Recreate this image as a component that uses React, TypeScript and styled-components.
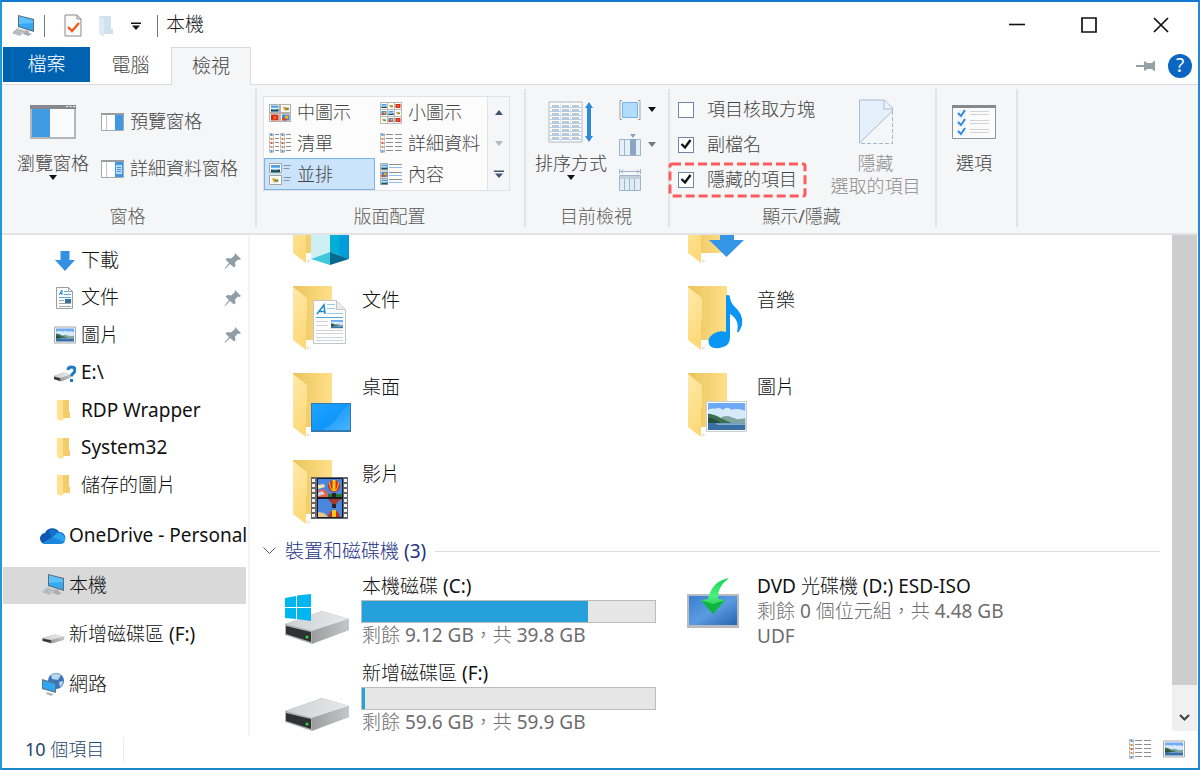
import React, { useLayoutEffect, useRef } from "react";
import styled, { createGlobalStyle, css } from "styled-components";

const GlobalStyle = createGlobalStyle`
  *, *::before, *::after { box-sizing: border-box; }
  body {
    margin: 0;
    background: #fff;
    color: #1b1b1b;
    font: 400 18px/25px "Noto Sans", "Noto Sans CJK TC Light", "Noto Sans CJK TC", sans-serif;
  }
  button, input { font: inherit; color: inherit; }
  svg { display: block; flex: none; }
`;

/* ---------- window frame ---------- */

const Window = styled.div`
  display: flex;
  flex-direction: column;
  height: 100vh;
  min-height: 600px;
  border: 2px solid;
  border-color: #1279cf #2b86d3 #1b86cc #1b9ae0;
  background: #fff;
  overflow: hidden;
`;

const plainButton = css`
  display: flex;
  align-items: center;
  justify-content: center;
  padding: 0;
  border: 0;
  background: none;
  white-space: nowrap;
`;

const TitleBar = styled.header`
  display: flex;
  align-items: center;
  height: 45px;
  padding: 0 1px 0 9px;
`;

const QuickAccess = styled.div`
  display: flex;
  align-items: center;
  height: 24px;
  margin-top: 3px;
`;

const QuickButton = styled.button<{ $gap: number }>`
  ${plainButton}
  margin-left: ${(p) => p.$gap}px;
`;

const Divider = styled.span<{ $gap: number }>`
  width: 1px;
  height: 22px;
  margin-left: ${(p) => p.$gap}px;
  background: #777;
`;

const Title = styled.h1`
  flex: 1;
  margin: 0 0 0 8px;
  font-size: 19px;
  font-weight: 400;
`;

const WindowButton = styled.button`
  ${plainButton}
  width: 72px;
  height: 44px;
`;

/* ---------- tabs ---------- */

const TabBar = styled.nav`
  display: flex;
  height: 38px;
  padding: 0 6px 0 1px;
  border-bottom: 1px solid #dadbdc;
`;

const Tab = styled.button<{ $kind?: "file" | "active" }>`
  ${plainButton}
  width: 81px;
  height: 37px;
  font-size: 19px;
  color: #444;
  ${(p) =>
    p.$kind === "file" &&
    css`
      width: 87px;
      height: 35px;
      background: #0063b1;
      color: #fff;
    `}
  ${(p) =>
    p.$kind === "active" &&
    css`
      width: 80px;
      height: 38px;
      border: 1px solid #dadbdc;
      border-bottom: 0;
      background: #f5f6f7;
    `}
`;

const TabTools = styled.div`
  display: flex;
  align-items: center;
  gap: 12px;
  margin-left: auto;
`;

const HelpButton = styled.button`
  ${plainButton}
  width: 24px;
  height: 24px;
  border-radius: 50%;
  background: #0b66c3;
  color: #fff;
  font-size: 19px;
`;

/* ---------- ribbon ---------- */

const Ribbon = styled.section`
  display: flex;
  height: 150px;
  padding: 4px 0 6px;
  border-bottom: 2px solid #e2e3e4;
  background: #f5f6f7;
`;

const Group = styled.div<{ $width: number }>`
  display: flex;
  flex-direction: column;
  width: ${(p) => p.$width}px;
  border-right: 2px solid #e2e3e4;
`;

const GroupBody = styled.div<{ $left: number }>`
  display: flex;
  flex: 1;
  padding-left: ${(p) => p.$left}px;
`;

const GroupCaption = styled.div`
  height: 22px;
  padding-right: 2px;
  line-height: 22px;
  text-align: center;
  color: #5a5a5a;
`;

const BigButton = styled.button<{ $width: number }>`
  ${plainButton}
  flex-direction: column;
  justify-content: flex-start;
  width: ${(p) => p.$width}px;
  padding-top: 3px;
  color: #444;
  line-height: 23px;

  &:disabled { color: #8c8c8c; }
`;

const BigIcon = styled.span`
  display: flex;
  align-items: center;
  height: 60px;
`;

const SideButtons = styled.div<{ $top: number; $gap: number }>`
  display: flex;
  flex-direction: column;
  align-items: flex-start;
  gap: ${(p) => p.$gap}px;
  padding: ${(p) => p.$top}px 0 0 7px;
`;

const SideButton = styled.button`
  ${plainButton}
  gap: 6px;
  min-height: 25px;
  color: #444;
`;

const Gallery = styled.div`
  display: grid;
  grid-template-columns: 111px 112px 22px;
  align-self: flex-start;
  margin-top: 7px;
  border: 1px solid #dfe2e8;
  background: #fcfcfc;
`;

const GalleryColumn = styled.div`
  display: grid;
  grid-template-rows: 31px 30px 32px;
`;

const GalleryItem = styled.button<{ $active?: boolean }>`
  ${plainButton}
  justify-content: flex-start;
  gap: 6px;
  padding-left: 4px;
  border: 1px solid ${(p) => (p.$active ? "#78b4e8" : "transparent")};
  background: ${(p) => (p.$active ? "#cce4fb" : "transparent")};
  color: #444;
`;

const GalleryScroll = styled(GalleryColumn)`
  border-left: 1px solid #dfe2e8;
  background: #f5f6f7;
`;

const GalleryArrow = styled.button`
  ${plainButton}
`;

const CheckList = styled.div`
  display: flex;
  flex-direction: column;
  gap: 10px;
  width: 150px;
  padding-top: 8px;
`;

const CheckLabel = styled.label`
  display: flex;
  position: relative;
  align-items: center;
  gap: 13px;
  color: #444;
  white-space: nowrap;
`;

const CheckBox = styled.input`
  appearance: none;
  width: 16px;
  height: 16px;
  margin: 0;
  border: 1px solid #6f86a8;
  background: #fff;

  & + svg { visibility: hidden; }
  &:checked + svg { visibility: visible; }
`;

const CheckMark = styled.svg`
  position: absolute;
  left: 2px;
  top: 6px;
  pointer-events: none;
`;

const Highlight = styled.svg`
  position: absolute;
  left: -10px;
  top: -5px;
  pointer-events: none;
`;

/* ---------- body ---------- */

const Body = styled.div`
  display: flex;
  flex: 1;
  min-height: 0;
`;

const Sidebar = styled.nav`
  width: 248px;
  padding: 7px 0 0 1px;
  border-right: 2px solid #f4f4f4;
  font-size: 19px;
`;

const QuickList = styled.ul`
  display: grid;
  grid-auto-rows: 1fr;
  height: 262px;
  margin: 0 0 13px;
  padding: 0;
  list-style: none;
`;

const RootList = styled.ul`
  display: flex;
  flex-direction: column;
  justify-content: space-between;
  height: 186px;
  margin: 0;
  padding: 0;
  list-style: none;
`;

const NavLink = styled.a<{ $root?: boolean; $active?: boolean }>`
  display: flex;
  align-items: center;
  gap: ${(p) => (p.$root ? 3 : 5)}px;
  height: 37px;
  margin-right: 2px;
  padding: 0 4px 0 ${(p) => (p.$root ? 37 : 51)}px;
  background: ${(p) => (p.$active ? "#d9d9d9" : "transparent")};
  color: #111;
  text-decoration: none;
  white-space: nowrap;

  > svg { margin-left: auto; }
`;

const NavIcon = styled.span<{ $root?: boolean }>`
  display: flex;
  flex: none;
  justify-content: center;
  width: ${(p) => (p.$root ? 26 : 22)}px;
`;

const Content = styled.main`
  flex: 1;
  min-width: 0;
  padding-left: 34px;
  overflow: hidden;
`;

const Tiles = styled.div`
  display: grid;
  grid-template-columns: 395px 395px;
  grid-auto-rows: 87px;
`;

const Tile = styled.article`
  display: flex;
  gap: 7px;
`;

const TileText = styled.div`
  width: 295px;
  padding-top: 6px;
  font-size: 19px;
`;

const TileName = styled.h3`
  margin: 0;
  padding-left: 1px;
  font-size: 19px;
  font-weight: 400;
  color: #111;
  white-space: nowrap;
`;

const TileDetail = styled.p`
  margin: 0;
  padding-left: 1px;
  color: #6d6d6d;
  white-space: nowrap;
`;

const Usage = styled.progress`
  appearance: none;
  display: block;
  width: 295px;
  height: 23px;
  margin-top: 1px;
  border: 1px solid #bcbcbc;

  &::-webkit-progress-bar { background: #e6e6e6; }
  &::-webkit-progress-value { background: #26a0da; }
`;

const GroupHeader = styled.h2`
  display: flex;
  align-items: center;
  gap: 9px;
  height: 16px;
  margin: 0 12px 9px -21px;
  font-size: 19px;
  font-weight: 400;
  color: #1e3287;

  &::after {
    content: "";
    flex: 1;
    height: 1px;
    background: #dcdcdc;
  }
`;

const ScrollBar = styled.div`
  display: flex;
  flex-direction: column;
  width: 25px;
  margin: 0 1px 5px 0;
  background: #f0f0f0;
`;

const Thumb = styled.div`
  flex: 1;
  background: #cdcdcd;
`;

const ScrollButton = styled.button`
  ${plainButton}
  height: 46px;
  padding-top: 20px;
`;

const StatusBar = styled.footer`
  display: flex;
  align-items: center;
  height: 32px;
  padding: 0 13px 6px 23px;
  color: #26456b;
`;

const StatusText = styled.span`
  padding-right: 19px;
  border-right: 1px solid #ededed;
`;

const StatusButtons = styled.div`
  display: flex;
  gap: 12px;
  margin-left: auto;
`;

/* ---------- icons ---------- */

const ComputerIcon = () => (
  <svg width="24" height="24" viewBox="0 0 24 24">
    <path d="M7 1 23 5v13L7 13z" fill="#5c6b76" />
    <path d="M8 2.200 22 6v10.500L8 12.200z" fill="#35a9f5" />
    <path d="M8 2.200 22 6v3L8 10z" fill="#5cc0fb" />
    <path d="m14 16 4 1v2l3 1-4 2-5-2z" fill="#a7adb2" />
    <path d="m6 14 9 2.500-6 5.500-8-3z" fill="#c5c9cc" />
    <path d="m5 16 8 2M3.500 17.500l7 2M2 19l7 2" stroke="#8d9499" strokeWidth=".8" strokeDasharray="1.500 .8" />
  </svg>
);

const CheckPageIcon = () => (
  <svg width="18" height="24" viewBox="0 0 18 24">
    <path d="M1 1h12l4 4v17H1z" fill="#fafafa" stroke="#8b8b8b" />
    <path d="M13 1v4h4" fill="none" stroke="#8b8b8b" />
    <path d="m4 13 4 4 7-8" fill="none" stroke="#f05a1a" strokeWidth="2.400" />
  </svg>
);

const PaleFolderIcon = () => (
  <svg width="16" height="24" viewBox="0 0 16 24">
    <path d="M1 2h12v13h2v5H5z" fill="#cfe0ee" />
    <path d="m1 2 5 3v18l-5-3z" fill="#dfeaf4" />
  </svg>
);

const Caret = ({ color = "#111", bar = false, up = false }) => (
  <svg width="10" height={bar ? 8 : 5} viewBox={bar ? "0 0 10 8" : "0 0 10 5"}>
    {bar && <path d="M0 .5h10v1.500H0z" fill={color} />}
    <path d={bar ? "M1 3.500h8L5 8z" : up ? "M1 5h8L5 0z" : "M1 0h8L5 5z"} fill={color} />
  </svg>
);

const FlatPinIcon = () => (
  <svg width="20" height="12" viewBox="0 0 20 12">
    <path d="M0 5h8V2l1-1 2 2h5l2-2h1v10h-1l-2-2h-5l-2 2-1-1V7H0z" fill="#93a0a6" />
  </svg>
);

const PinIcon = () => (
  <svg width="18" height="18" viewBox="0 0 18 18">
    <path d="m11 1 6 6-1.500 1-1.500-.5-3 3 .5 3.500-1.500 1.500-4-3.500L1 17l-.5-.5L5 11 1.500 7.500 3.500 6l3.500.5 3.500-3z" fill="#8f9da6" />
  </svg>
);

const NavPaneIcon = () => (
  <svg width="46" height="34" viewBox="0 0 46 34">
    <path d="M1 1h44v32H1z" fill="#fafbfc" stroke="#9da1a4" strokeWidth="1.500" />
    <path d="M0 0h46v4H0z" fill="#85898d" />
    <path d="M36 1.500h2M39.500 1.500h2M43 1.500h2" stroke="#fff" />
    <path d="M2 4h18v28H2z" fill="#419be3" />
  </svg>
);

const SidePaneIcon = ({ detail = false }) => (
  <svg width="23" height="18" viewBox="0 0 23 18">
    <path d="M.5.500h22v17H.5z" fill="#fff" stroke="#a6a9ac" />
    <path d="M0 0h23v2H0z" fill="#9a9da0" />
    <path d="M5.500 2v15" stroke="#c3c6c8" />
    <path d="M14 2h8v15h-8z" fill="#3f98e2" />
    {detail && <path d="M15 5h6v9h-6z" fill="#b7dcf8" />}
    {detail && <path d="M16 7.500h4M16 9.500h4M16 11.500h4" stroke="#3f98e2" />}
  </svg>
);

const Thumbnail = ({ x, y, s, kind }: { x: number; y: number; s: number; kind: number }) => (
  <g transform={`translate(${x} ${y}) scale(${s})`}>
    <path d="M0 0h10v8H0z" fill={["#4ba0e8", "#f4f4f4", "#d8261c", "#3f7fd6"][kind]} />
    {kind === 0 && <path d="M0 3h10v2H0z" fill="#e3f1fc" />}
    {kind === 0 && <path d="M0 5 4 6l6-1v3H0z" fill="#21514f" />}
    {kind === 1 && <path d="M1 2h4l4 4-5 1z" fill="#e8942d" />}
    {kind === 1 && <path d="M5 3h4v3H6z" fill="#4a9c3c" />}
    {kind === 2 && <path d="M3 2 7 6M7 2 3 7" stroke="#f5b21f" />}
    {kind === 3 && <circle cx="6" cy="3.500" r="2.500" fill="#efb51d" />}
    {kind === 3 && <path d="M0 5h6v3H0z" fill="#d9472b" />}
  </g>
);

const MediumIcon = () => (
  <svg width="22" height="18" viewBox="0 0 22 18">
    {[0, 1, 2, 3].map((i) => (
      <g key={i}>
        <rect x={0.5 + (i % 2) * 11} y={0.5 + Math.floor(i / 2) * 9} width="10" height="8" fill="#fff" stroke="#b5b1a8" />
        <Thumbnail x={2 + (i % 2) * 11} y={1.500 + Math.floor(i / 2) * 9} s={0.75} kind={i} />
      </g>
    ))}
  </svg>
);

const SmallIcon = () => (
  <svg width="22" height="22" viewBox="0 0 22 22">
    {[0, 1, 2, 3, 0, 1, 1, 3, 2].map((kind, i) => (
      <g key={i}>
        <rect x={0.5 + (i % 3) * 7} y={0.5 + Math.floor(i / 3) * 7} width="7" height="7" fill="#fff" stroke="#bdb9b0" />
        <Thumbnail x={1.500 + (i % 3) * 7} y={2 + Math.floor(i / 3) * 7} s={0.5} kind={kind} />
      </g>
    ))}
  </svg>
);

const dots = ["#4b94dc", "#d98a35", "#d0592c", "#c9945c", "#4b94dc"];

const Strip = ({ x }: { x: number }) => (
  <g>
    <path d={`M${x + 0.5} .5h4v19h-4z`} fill="#f8f8f8" stroke="#b0b0b0" strokeDasharray="3 1" />
    {dots.map((c, i) => (
      <rect key={i} x={x + 1.500} y={1 + i * 4} width="2" height="2" fill={c} />
    ))}
  </g>
);

const ListIcon = () => (
  <svg width="22" height="20" viewBox="0 0 22 20">
    <Strip x={0} />
    <Strip x={11} />
    <path d="M6 1.500h4M6 5.500h4M6 9.500h4M6 13.500h4M6 17.500h4M17 1.500h5M17 5.500h5M17 9.500h5M17 13.500h5M17 17.500h5" stroke="#8d8d8d" />
  </svg>
);

const DetailsIcon = () => (
  <svg width="22" height="20" viewBox="0 0 22 20">
    <Strip x={0} />
    <path d="M6 1.500h7M6 5.500h7M6 9.500h7M6 13.500h7M6 17.500h7M15 1.500h7M15 5.500h7M15 9.500h7M15 13.500h7M15 17.500h7" stroke="#8d8d8d" />
  </svg>
);

const TilesIcon = () => (
  <svg width="22" height="22" viewBox="0 0 22 22">
    <path d="M.5.500h12v9H.5zM.5 12.500h12v9H.5z" fill="#fff" stroke="#a6a49c" />
    <Thumbnail x={2} y={2} s={0.9} kind={0} />
    <Thumbnail x={2} y={14} s={0.8} kind={1} />
    <path d="M14.500 2.500H22M14.500 5.500h6M14.500 14.500H22M14.500 17.500h6" stroke="#8296a8" />
  </svg>
);

const ContentIcon = () => (
  <svg width="22" height="22" viewBox="0 0 22 22">
    {[0, 3, 0].map((kind, i) => (
      <g key={i}>
        <rect x=".5" y={0.5 + i * 7.500} width="7" height="6" fill="#fff" stroke="#b0b0aa" />
        <Thumbnail x={1.500} y={1.500 + i * 7.500} s={0.6} kind={kind} />
      </g>
    ))}
    <path d="M9 1.500h13M9 9.500h13M9 16.500h13" stroke="#8d8d8d" />
    <path d="M9 4.500h13M9 12.500h13M9 19.500h13" stroke="#8cc1ee" />
  </svg>
);

const SortIcon = () => (
  <svg width="46" height="42" viewBox="0 0 46 42">
    <path d="M1 1h33v40H1z" fill="#fbfcfd" stroke="#b4b8bb" />
    {[5, 9, 13, 17, 21, 25, 29, 33, 37].map((y) => (
      <g key={y}>
        <path d={`M4 ${y}h7M14 ${y}h7M24 ${y}h7`} stroke="#c3c8cd" strokeWidth="2" />
        <path d={`M2 ${y + 1.500}h31`} stroke="#a9d0f2" />
      </g>
    ))}
    <path d="M12.500 2v38M22.500 2v38" stroke="#dde3e8" />
    <path d="m41 1 4 6h-2v28h2l-4 6-4-6h2V7h-2z" fill="#2d8bd9" />
  </svg>
);

const GroupByIcon = () => (
  <svg width="22" height="22" viewBox="0 0 22 22">
    <path d="M3 1.500H1v19h2M19 1.500h2v19h-2" fill="none" stroke="#9aa1a7" />
    <path d="M3.500 3.500h15v15h-15z" fill="#b1dcfb" stroke="#73b4ea" />
  </svg>
);

const AddColumnIcon = () => (
  <svg width="22" height="22" viewBox="0 0 22 22">
    <path d="M11 0h6l-3 4z" fill="#8aa4bf" />
    <path d="M.5 5.500h21v16H.5z" fill="#e6f0f9" stroke="#9fb4c8" />
    <path d="M11 5h6v16h-6z" fill="#8aa6c2" />
    <path d="M5.500 5v16" stroke="#9fb4c8" />
  </svg>
);

const FitColumnsIcon = () => (
  <svg width="22" height="22" viewBox="0 0 22 22">
    <path d="M.5 0v5M21.500 0v5M1 2.500h20" stroke="#9fb4c8" />
    <path d="m4 .5-2 2 2 2M18 .5l2 2-2 2" fill="none" stroke="#9fb4c8" />
    <path d="M.5 6.500h21v15H.5z" fill="#e0edf8" stroke="#9fb4c8" />
    <path d="M1 7h20v3H1z" fill="#c3d0dc" />
    <path d="M5.500 10v11M10.500 10v11M15.500 10v11" stroke="#9fb4c8" />
  </svg>
);

const HideIcon = () => (
  <svg width="34" height="46" viewBox="0 0 34 46">
    <path d="M.5 1h25l8 8v3L.5 44z" fill="#e4f0fb" stroke="#a8bccf" />
    <path d="M25 1v9h8" fill="#eef5fc" stroke="#a8bccf" />
    <path d="M33.500 12v32.500H.5" fill="none" stroke="#a3b8cc" strokeDasharray="4 2" />
  </svg>
);

const OptionsIcon = () => (
  <svg width="44" height="34" viewBox="0 0 44 34">
    <path d="M.5.500h43v33H.5z" fill="#fbfbfb" stroke="#8f9397" />
    <path d="M0 0h44v3H0z" fill="#85898c" />
    {[7, 16, 25].map((y) => (
      <g key={y}>
        <path d={`M6 ${y - 1}h7v6H6z`} fill="#fff" stroke="#dcdedf" strokeWidth=".6" />
        <path d={`m6 ${y + 1} 3 3 4-6`} fill="none" stroke="#2c8be0" strokeWidth="2" />
        <path d={`M18 ${y - 0.5}h19M18 ${y + 2.500}h19`} stroke="#d0d2d3" />
      </g>
    ))}
  </svg>
);

/* Lake scene shared by every picture-like icon, drawn on a 40 x 28 field. */
const Scenery = ({ x, y, sx, sy }: { x: number; y: number; sx: number; sy: number }) => (
  <g transform={`translate(${x} ${y}) scale(${sx} ${sy})`}>
    <path d="M0 0h40v28H0z" fill="#6fa8f5" />
    <path d="M0 7q5-2 8-1 4-2 8 1 5-4 9 0 8-2 15 1v12H0z" fill="#d6eafb" />
    <path d="M14 15q6-3 12 0l6 2 8-1v5H14z" fill="#7fa59f" />
    <path d="M0 11q8 1 14 5l12 5H0z" fill="#3c6e4f" />
    <path d="M0 15q8 1 14 6H0z" fill="#27503a" />
    <path d="M0 21h40v7H0z" fill="#3b6fa3" />
    <path d="M8 21h32v2H10z" fill="#7ea9cc" />
  </g>
);

const FolderShape = () => (
  <g>
    <path d="M23 64l4 2-4 2z" fill="#e6e6e6" />
    <path d="M9 4h39v54H9z" fill="url(#folderBack)" />
    <path d="m9 5 14 11v21l-1 3v28L9 58z" fill="url(#folderFlap)" />
  </g>
);

const Gradients = () => (
  <svg width="0" height="0" style={{ position: "absolute" }} aria-hidden="true">
    <defs>
      <linearGradient id="folderBack"><stop offset="0" stopColor="#e9c45c" /><stop offset="1" stopColor="#ffe08a" /></linearGradient>
      <linearGradient id="folderFlap" x1="0" y1="0" x2="0.300" y2="1"><stop offset="0" stopColor="#ffeaab" /><stop offset="1" stopColor="#fdd978" /></linearGradient>
      <linearGradient id="desk" x1="0" y1="0" x2="1" y2="1"><stop offset="0" stopColor="#1ea2ff" /><stop offset="0.600" stopColor="#0f97fb" /><stop offset="1" stopColor="#40b1ff" /></linearGradient>
      <linearGradient id="driveTop"><stop offset="0" stopColor="#cfd0d2" /><stop offset="1" stopColor="#e8e9eb" /></linearGradient>
      <linearGradient id="driveSide"><stop offset="0" stopColor="#9c9d9f" /><stop offset="1" stopColor="#c6c7c8" /></linearGradient>
      <linearGradient id="screen" x1="0" y1="0" x2="1" y2="1"><stop offset="0" stopColor="#3a7fd0" /><stop offset="0.500" stopColor="#5a9be0" /><stop offset="1" stopColor="#2a65b4" /></linearGradient>
      <linearGradient id="arrowGreen" x1="0" y1="0" x2="0" y2="1"><stop offset="0" stopColor="#14d65a" /><stop offset="0.500" stopColor="#4cf07c" /><stop offset="1" stopColor="#10b93c" /></linearGradient>
    </defs>
  </svg>
);

const TileIcon = ({ children }: { children: React.ReactNode }) => (
  <svg width="70" height="80" viewBox="0 0 70 80">{children}</svg>
);

const ObjectsOverlay = () => (
  <g>
    <path d="M27 30h19v27L27 64z" fill="#cdeff5" />
    <path d="M46 30h19v34L46 57z" fill="#00aed6" />
    <path d="M55 30h10v34l-10-4z" fill="#009ddc" />
    <path d="M27 64 46 57v13z" fill="#3fc8d9" />
    <path d="M65 64 46 57v13z" fill="#046a90" />
  </g>
);

const DownloadOverlay = () => <path d="M41 28h14v17h10L47.500 62 30 45h11z" fill="#3596e8" />;

const DocumentOverlay = () => (
  <g>
    <path d="M29.500 18.500h23l9 9v34h-32z" fill="#fdfdfd" stroke="#c3c6c9" />
    <path d="M52.500 18.500v9h9" fill="#e9ebec" stroke="#c3c6c9" />
    <path d="m33 32 7-9 1 9M35 29.500h6" fill="none" stroke="#1c86d1" strokeWidth="1.500" />
    <path d="M43 22.500h8M43 26.500h8M43 31.500h16" stroke="#9ac9f0" />
    <path d="M32 35.500h27" stroke="#4ba5e2" />
    <path d="M32 39.500h12M32 43.500h12M32 48.500h27M32 51.500h27M32 55.500h27M32 58.500h27" stroke="#d0d3d5" />
    <Scenery x={47} y={38} sx={0.3} sy={0.29} />
  </g>
);

const DesktopOverlay = () => (
  <g>
    <path d="M27 34h40v29H27z" fill="#3478b0" />
    <path d="M28 35h38v26H28z" fill="url(#desk)" />
    <path d="M66 35v26H38q12-5 19-18z" fill="#58bbff" opacity=".35" />
  </g>
);

const MusicOverlay = () => (
  <path d="M47 14q0-1 2-1 2 0 2 3 1 6 7 11 9 10 3 21-2 3-3 2 3-12-7-18v23q0 8-7 10-8 3-13-1-4-7 3-12 6-4 13-2z" fill="#0b95f5" />
);

const PictureOverlay = () => (
  <g>
    <path d="M27.500 32.500h40v30h-40z" fill="#fafbfb" stroke="#cdd0d2" />
    <Scenery x={29} y={34} sx={0.93} sy={0.96} />
  </g>
);

const Balloon = ({ y }: { y: number }) => (
  <g transform={`translate(50 ${y})`}>
    <circle cx="0" cy="0" r="6" fill="#c9301f" />
    <path d="M-1.500-6h3v11h-3z" fill="#f4c51c" />
    <path d="M-4.500-4q0 6 3 9M4.500-4q0 6-3 9" stroke="#f4c51c" fill="none" />
    <path d="M-2 7h4v4h-4z" fill="#2e2320" />
  </g>
);

const VideoOverlay = () => (
  <g>
    <path d="M27 21h37v42H27z" fill="#66686b" />
    <path d="M29.500 23v39M61.500 23v39" stroke="#f3f3f3" strokeWidth="3" strokeDasharray="3 2" />
    <path d="M33 22h26v40H33z" fill="#151b28" />
    <path d="M34 23h24v18H34zM34 43h24v18H34z" fill="#4a86dc" />
    <path d="M34 35q5-4 9 1l2 3v2H34z" fill="#e8624a" />
    <path d="m34 29 6-1 1 3-7 2z" fill="#f0e2b0" />
    <path d="m34 37 4-2 3 3-7 2z" fill="#c9d8ee" />
    <path d="M44 38h14v3H44z" fill="#1f7a32" />
    <Balloon y={30} />
    <path d="m44 43 6 7 7-7z" fill="#a53a2c" />
    <path d="M48 48h4v4h-4z" fill="#2e2320" />
    <path d="m34 56 6 1 4 4H34z" fill="#e8c884" />
    <path d="M44 61q2-7 6-7t6 7z" fill="#c9301f" />
    <path d="M48 61v-7h4v7z" fill="#f4c51c" />
  </g>
);

const DriveShape = () => (
  <g>
    <path d="M1 56 38 43l27 8v11L28 75 1 66z" fill="#a9aaac" />
    <path d="M1 56 38 43l27 8-37 12z" fill="url(#driveTop)" />
    <path d="m28 63 37-12v11L28 76z" fill="url(#driveSide)" />
    <path d="m1 56 27 7v13L1 67z" fill="#b2b3b5" />
    <path d="m2 58 25 6v10L2 66z" fill="#303133" />
    <circle cx="23" cy="69" r="1.500" fill="#25e04c" />
  </g>
);

const WindowsLogo = () => (
  <path d="m1 30 11-2v11H1zM13 27.500 27 26v13H13zM1 40h11v11L1 50zM13 40h14v13l-14-2z" fill="#00b6f1" />
);

const DiscShape = () => (
  <g>
    <path d="M8 26h52v34H8z" fill="#b8bcc0" />
    <path d="M10 28h48v29H10z" fill="url(#screen)" />
    <path d="M50 10q-17 3-21 21l-7 1 12 14 12-14-7-1q-1-12 11-21z" fill="url(#arrowGreen)" />
    <path d="m22 32 12 14 12-14-12 4z" fill="#0fb541" />
  </g>
);

const DownArrowIcon = () => (
  <svg width="22" height="22" viewBox="0 0 22 22">
    <path d="M6.500 1h9v9H21L11 21 1 10h5.500z" fill="#3390e3" />
  </svg>
);

const DocumentIcon = () => (
  <svg width="22" height="24" viewBox="0 0 22 24">
    <path d="M2.500 1.500h12l4 4v17h-16z" fill="#fdfdfd" stroke="#9a9ea2" />
    <path d="M14.500 1.500v4h4" fill="none" stroke="#9a9ea2" />
    <path d="m5 9 3-5v5M6 7.500h2" stroke="#1c86d1" fill="none" />
    <path d="M10 5.500h4M10 8.500h7M5 11.500h12" stroke="#58a9e6" />
    <path d="M5 14.500h5M5 17.500h12M5 20.500h12" stroke="#a0a4a8" />
    <path d="M11 13h6v4h-6z" fill="#387099" />
  </svg>
);

const PictureIcon = () => (
  <svg width="22" height="18" viewBox="0 0 22 18">
    <path d="M.5 1h21v16H.5z" fill="#f6f6f6" stroke="#a6a9ab" />
    <Scenery x={2} y={2.500} sx={0.45} sy={0.46} />
  </svg>
);

const SmallDriveIcon = ({ unknown = false }) => (
  <svg width={unknown ? 22 : 24} height="24" viewBox={unknown ? "1 0 22 24" : "0 0 24 24"}>
    <g transform={unknown ? "translate(0 0) scale(.27 .27)" : "translate(1 0) scale(.34 .27)"}>
      <DriveShape />
    </g>
    {unknown && (
      <path d="M15 9q0-3 3.500-3T22 9q0 2-2 3.500-1.500 1-1.500 3M18.500 18v3" fill="none" stroke="#1f78c8" strokeWidth="3" />
    )}
  </svg>
);

const FolderIcon = () => (
  <svg width="22" height="24" viewBox="0 0 22 24">
    <path d="M3 2h12v12h1v6H6z" fill="#f3cd69" />
    <path d="M3 2h6v17l2 1-4 3-4-2z" fill="#ffe18e" />
  </svg>
);

const CloudIcon = () => (
  <svg width="26" height="18" viewBox="0 0 26 18">
    <path d="M6 17a5.500 5.500 0 0 1-1-11 8 8 0 0 1 14-1 6 6 0 0 1 6 8z" fill="#0c59b3" />
    <path d="M9 4a8 8 0 0 1 10 1l2 2-9 5z" fill="#1670cc" />
    <path d="M3 16 14 9l3-3q6-1 8 5 1 5-5 6H6z" fill="#2aa4ec" />
    <path d="m12 10 13 5q-2 2-5 2H6q-2 0-3-1z" fill="#1c86dc" />
  </svg>
);

const NetworkIcon = () => (
  <svg width="24" height="24" viewBox="0 0 24 24">
    <circle cx="15" cy="9" r="8" fill="#3a76b8" />
    <path d="M10 3q5-3 10 0l-3 5-6-1zM18 10l4-1q0 4-3 6z" fill="#b9d6ee" />
    <path d="m1 7 14 4v10L1 17z" fill="#5c7484" />
    <path d="m2 8.500 12 3.500v7.500L2 16z" fill="#2ea8f4" />
    <path d="m6 20 7 2-3 2-5-2z" fill="#b4b9bd" />
  </svg>
);

/* ---------- data ---------- */

const quickItems = [
  { name: "下載", icon: <DownArrowIcon />, pinned: true },
  { name: "文件", icon: <DocumentIcon />, pinned: true },
  { name: "圖片", icon: <PictureIcon />, pinned: true },
  { name: "E:\\", icon: <SmallDriveIcon unknown /> },
  { name: "RDP Wrapper", icon: <FolderIcon /> },
  { name: "System32", icon: <FolderIcon /> },
  { name: "儲存的圖片", icon: <FolderIcon /> },
];

const rootItems = [
  { name: "OneDrive - Personal", icon: <CloudIcon /> },
  { name: "本機", icon: <ComputerIcon />, active: true },
  { name: "新增磁碟區 (F:)", icon: <SmallDriveIcon /> },
  { name: "網路", icon: <NetworkIcon /> },
];

const folders = [
  { overlay: <ObjectsOverlay /> },
  { overlay: <DownloadOverlay /> },
  { name: "文件", overlay: <DocumentOverlay /> },
  { name: "音樂", overlay: <MusicOverlay /> },
  { name: "桌面", overlay: <DesktopOverlay /> },
  { name: "圖片", overlay: <PictureOverlay /> },
  { name: "影片", overlay: <VideoOverlay /> },
];

const drives = [
  { name: "本機磁碟 (C:)", icon: <><DriveShape /><WindowsLogo /></>, used: 77, lines: ["剩餘 9.12 GB，共 39.8 GB"] },
  { name: "DVD 光碟機 (D:) ESD-ISO", icon: <DiscShape />, lines: ["剩餘 0 個位元組，共 4.48 GB", "UDF"] },
  { name: "新增磁碟區 (F:)", icon: <DriveShape />, used: 1, lines: ["剩餘 59.6 GB，共 59.9 GB"] },
];

const layouts = [
  [
    { name: "中圖示", icon: <MediumIcon /> },
    { name: "清單", icon: <ListIcon /> },
    { name: "並排", icon: <TilesIcon />, active: true },
  ],
  [
    { name: "小圖示", icon: <SmallIcon /> },
    { name: "詳細資料", icon: <DetailsIcon /> },
    { name: "內容", icon: <ContentIcon /> },
  ],
];

const viewOptions = [
  { name: "項目核取方塊", checked: false },
  { name: "副檔名", checked: true },
  { name: "隱藏的項目", checked: true, highlighted: true },
];

const SCROLL_START = 40;

export default function App() {
  const content = useRef<HTMLElement>(null);

  useLayoutEffect(() => {
    if (content.current) content.current.scrollTop = SCROLL_START;
  }, []);

  return (
    <Window>
      <GlobalStyle />
      <Gradients />
      <TitleBar>
        <QuickAccess>
          <ComputerIcon />
          <Divider $gap={9} />
          <QuickButton $gap={19}><CheckPageIcon /></QuickButton>
          <QuickButton $gap={16}><PaleFolderIcon /></QuickButton>
          <QuickButton $gap={17}><Caret bar /></QuickButton>
          <Divider $gap={16} />
        </QuickAccess>
        <Title>本機</Title>
        <WindowButton>
          <svg width="16" height="16" viewBox="0 0 16 16"><path d="M0 7.500h16" stroke="#111" strokeWidth="1.600" /></svg>
        </WindowButton>
        <WindowButton>
          <svg width="16" height="16" viewBox="0 0 16 16"><path d="M1 1h14v14H1z" fill="none" stroke="#111" strokeWidth="1.700" /></svg>
        </WindowButton>
        <WindowButton>
          <svg width="16" height="16" viewBox="0 0 16 16"><path d="m1 1 14 14M15 1 1 15" stroke="#111" strokeWidth="1.700" /></svg>
        </WindowButton>
      </TitleBar>

      <TabBar>
        <Tab $kind="file">檔案</Tab>
        <Tab>電腦</Tab>
        <Tab $kind="active">檢視</Tab>
        <TabTools>
          <FlatPinIcon />
          <HelpButton>?</HelpButton>
        </TabTools>
      </TabBar>

      <Ribbon>
        <Group $width={255}>
          <GroupBody $left={10}>
            <BigButton $width={82}>
              <BigIcon><NavPaneIcon /></BigIcon>
              瀏覽窗格
              <Caret />
            </BigButton>
            <SideButtons $top={20} $gap={22}>
              <SideButton><SidePaneIcon />預覽窗格</SideButton>
              <SideButton><SidePaneIcon detail />詳細資料窗格</SideButton>
            </SideButtons>
          </GroupBody>
          <GroupCaption>窗格</GroupCaption>
        </Group>

        <Group $width={269}>
          <GroupBody $left={6}>
            <Gallery>
              {layouts.map((column, i) => (
                <GalleryColumn key={i}>
                  {column.map((item) => (
                    <GalleryItem key={item.name} $active={"active" in item}>
                      {item.icon}
                      {item.name}
                    </GalleryItem>
                  ))}
                </GalleryColumn>
              ))}
              <GalleryScroll>
                <GalleryArrow><Caret color="#44546f" up /></GalleryArrow>
                <GalleryArrow><Caret color="#b4bac4" /></GalleryArrow>
                <GalleryArrow><Caret color="#44546f" bar /></GalleryArrow>
              </GalleryScroll>
            </Gallery>
          </GroupBody>
          <GroupCaption>版面配置</GroupCaption>
        </Group>

        <Group $width={144}>
          <GroupBody $left={4}>
            <BigButton $width={82}>
              <BigIcon><SortIcon /></BigIcon>
              排序方式
              <Caret />
            </BigButton>
            <SideButtons $top={8} $gap={10}>
              <SideButton><GroupByIcon /><Caret /></SideButton>
              <SideButton><AddColumnIcon /><Caret color="#777" /></SideButton>
              <SideButton><FitColumnsIcon /></SideButton>
            </SideButtons>
          </GroupBody>
          <GroupCaption>目前檢視</GroupCaption>
        </Group>

        <Group $width={267}>
          <GroupBody $left={8}>
            <CheckList>
              {viewOptions.map((option) => (
                <CheckLabel key={option.name}>
                  <CheckBox type="checkbox" defaultChecked={option.checked} />
                  <CheckMark width="12" height="12" viewBox="0 0 12 12">
                    <path d="m1.500 6 3.500 3.500L10.500 2" fill="none" stroke="#111" strokeWidth="2.400" />
                  </CheckMark>
                  {option.name}
                  {option.highlighted && (
                    <Highlight width="139" height="36" viewBox="0 0 139 36">
                      <rect x="2" y="2" width="135" height="32" rx="2" fill="none" stroke="#fb5d5f" strokeWidth="3" strokeDasharray="9 4" />
                    </Highlight>
                  )}
                </CheckLabel>
              ))}
            </CheckList>
            <BigButton $width={95} disabled>
              <BigIcon><HideIcon /></BigIcon>
              <span>隱藏</span>
              <span>選取的項目</span>
            </BigButton>
          </GroupBody>
          <GroupCaption>顯示/隱藏</GroupCaption>
        </Group>

        <Group $width={81}>
          <GroupBody $left={0}>
            <BigButton $width={74}>
              <BigIcon><OptionsIcon /></BigIcon>
              選項
            </BigButton>
          </GroupBody>
        </Group>
      </Ribbon>

      <Body>
        <Sidebar>
          <QuickList>
            {quickItems.map((item) => (
              <li key={item.name}>
                <NavLink href="#">
                  <NavIcon>{item.icon}</NavIcon>
                  {item.name}
                  {item.pinned && <PinIcon />}
                </NavLink>
              </li>
            ))}
          </QuickList>
          <RootList>
            {rootItems.map((item) => (
              <li key={item.name}>
                <NavLink href="#" $root $active={item.active}>
                  <NavIcon $root>{item.icon}</NavIcon>
                  {item.name}
                </NavLink>
              </li>
            ))}
          </RootList>
        </Sidebar>

        <Content ref={content}>
          <Tiles>
            {folders.map((folder, i) => (
              <Tile key={i}>
                <TileIcon><FolderShape />{folder.overlay}</TileIcon>
                <TileText>{folder.name && <TileName>{folder.name}</TileName>}</TileText>
              </Tile>
            ))}
          </Tiles>
          <GroupHeader>
            <svg width="13" height="8" viewBox="0 0 13 8"><path d="m.5.500 6 6 6-6" fill="none" stroke="#555" /></svg>
            裝置和磁碟機 (3)
          </GroupHeader>
          <Tiles>
            {drives.map((drive) => (
              <Tile key={drive.name}>
                <TileIcon>{drive.icon}</TileIcon>
                <TileText>
                  <TileName>{drive.name}</TileName>
                  {drive.used !== undefined && <Usage max={100} value={drive.used} />}
                  {drive.lines.map((line) => <TileDetail key={line}>{line}</TileDetail>)}
                </TileText>
              </Tile>
            ))}
          </Tiles>
        </Content>

        <ScrollBar>
          <Thumb />
          <ScrollButton>
            <svg width="11" height="8" viewBox="0 0 11 8"><path d="m1 1 4.500 4.500L10 1" fill="none" stroke="#444" strokeWidth="2.200" /></svg>
          </ScrollButton>
        </ScrollBar>
      </Body>

      <StatusBar>
        <StatusText>10 個項目</StatusText>
        <StatusButtons>
          <QuickButton $gap={0}><DetailsIcon /></QuickButton>
          <QuickButton $gap={0}><PictureIcon /></QuickButton>
        </StatusButtons>
      </StatusBar>
    </Window>
  );
}
